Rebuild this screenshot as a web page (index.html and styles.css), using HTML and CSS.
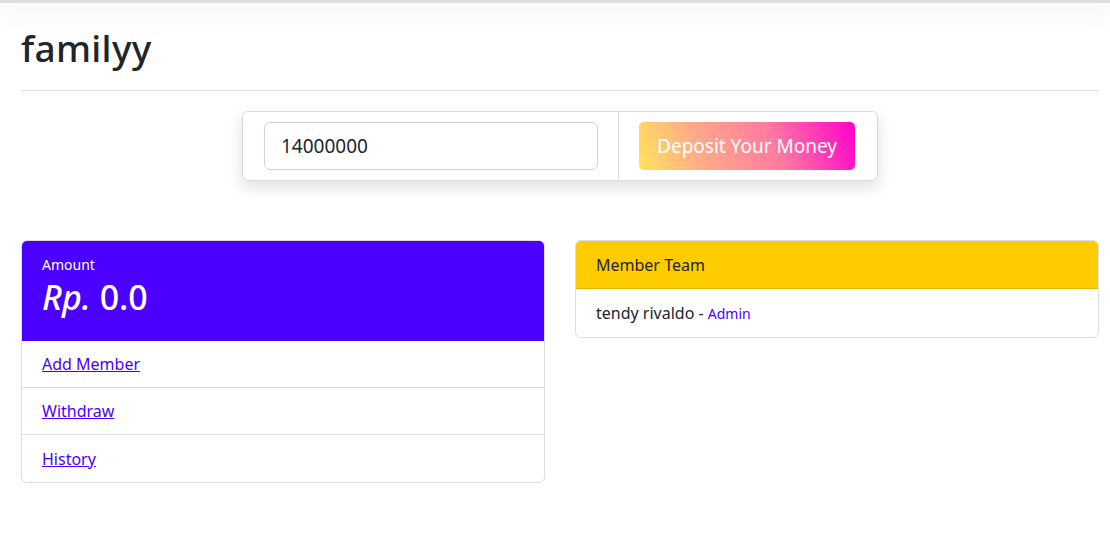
FILE: index.html
```html
<!DOCTYPE html>
<html>
<head>
<meta charset="utf-8">
<link rel="stylesheet" href="styles.css">
</head>
<body>
<div class="topbar"></div>
<main class="container">
  <h1 class="title">familyy</h1>
  <hr class="rule">
  <form class="deposit">
    <div class="deposit-input-wrap">
      <input class="deposit-input" type="text" value="14000000">
    </div>
    <div class="deposit-btn-wrap">
      <button class="deposit-btn" type="button">Deposit Your Money</button>
    </div>
  </form>
  <div class="cards">
    <section class="card">
      <div class="card-head purple">
        <div class="amount-label">Amount</div>
        <div class="amount-value"><em>Rp.</em> 0.0</div>
      </div>
      <ul class="list">
        <li class="list-item"><a href="#">Add Member</a></li>
        <li class="list-item"><a href="#">Withdraw</a></li>
        <li class="list-item"><a href="#">History</a></li>
      </ul>
    </section>
    <section class="card">
      <div class="card-head yellow">Member Team</div>
      <div class="member">tendy rivaldo - <span class="role">Admin</span></div>
    </section>
  </div>
</main>
</body>
</html>
```
FILE: styles.css
```css
* { box-sizing: border-box; }
html, body { margin: 0; padding: 0; background: #fff; }
body {
  font-family: "Noto Sans", "Open Sans", sans-serif;
  color: #212529;
  font-size: 16px;
}
.topbar {
  height: 3px;
  background: #dedede;
  box-shadow: 0 6px 24px rgba(0,0,0,0.25);
}
.container {
  padding: 0 11px 0 21px;
}
.title {
  margin: 20px 0 0;
  font-size: 37px;
  font-weight: 500;
  line-height: 50px;
  letter-spacing: 0.3px;
}
.rule {
  margin: 17px 0 20px;
  border: 0;
  border-top: 1px solid #dedede;
}
.deposit {
  width: 636px;
  margin: 0 auto;
  display: flex;
  border: 1px solid #dcdcdc;
  border-radius: 6px;
  box-shadow: 0 6px 16px rgba(0,0,0,0.13);
  background: #fff;
}
.deposit-input-wrap {
  padding: 10px 20px 10px 21px;
  border-right: 1px solid #dcdcdc;
}
.deposit-input {
  width: 334px;
  height: 48px;
  border: 1px solid #ced4da;
  border-radius: 6px;
  padding: 0 16px;
  font: inherit;
  font-size: 19px;
  color: #212529;
}
.deposit-btn-wrap {
  padding: 10px 20px 10px 20px;
}
.deposit-btn {
  width: 216px;
  height: 48px;
  border: 0;
  border-radius: 5px;
  background: linear-gradient(70deg, #fde45a 0%, #ffa88a 30%, #ff7aa0 62%, #ff00cc 100%);
  color: #fff;
  font: inherit;
  font-size: 19px;
  padding: 0;
}
.cards {
  margin-top: 59px;
  display: grid;
  grid-template-columns: 1fr 1fr;
  gap: 30px;
  align-items: start;
}
.card {
  border: 1px solid #dedede;
  border-radius: 6px;
  overflow: hidden;
}
.card-head.purple {
  background: #4b00ff;
  color: #fff;
  height: 100px;
  padding: 14px 20px 0;
  border-bottom: 1px solid #4b00ff;
}
.amount-label {
  font-size: 14px;
  line-height: 20px;
}
.amount-value {
  font-size: 34px;
  line-height: 44px;
  font-weight: 500;
}
.amount-value em { font-style: italic; }
.list {
  list-style: none;
  margin: 0;
  padding: 0;
}
.list-item {
  height: 47px;
  padding: 0 20px;
  display: flex;
  align-items: center;
  border-bottom: 1px solid #dedede;
}
.list-item:last-child { border-bottom: 0; }
.list-item a {
  color: #4b00ff;
  text-decoration: underline;
}
.card-head.yellow {
  background: #ffcc00;
  height: 48px;
  display: flex;
  align-items: center;
  padding: 0 20px;
  border-bottom: 1px solid #e6b800;
}
.member {
  height: 48px;
  display: flex;
  align-items: center;
  padding: 0 20px;
  white-space: pre;
}
.role {
  color: #4b00ff;
  font-size: 14px;
}
```
